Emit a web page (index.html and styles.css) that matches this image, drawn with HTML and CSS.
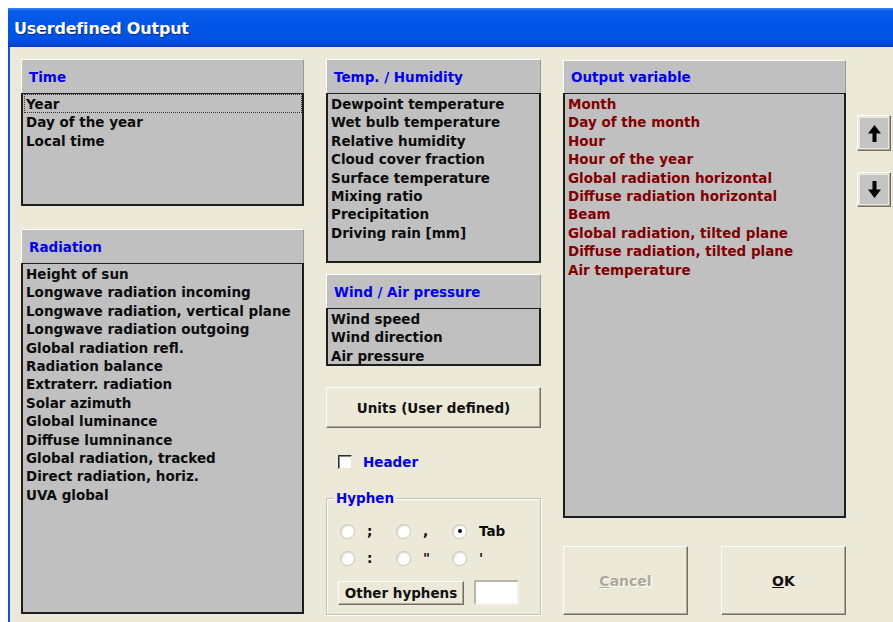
FILE: index.html
```html
<!DOCTYPE html>
<html lang="en">
<head>
<meta charset="utf-8">
<title>Userdefined Output</title>
<link rel="stylesheet" href="styles.css">
</head>
<body>
<div class="window">
  <div class="titlebar"><span class="title">Userdefined Output</span></div>
  <div class="client">

    <div class="col col-left">
      <div class="panel">
        <div class="panel-head">Time</div>
        <div class="list list-time">
          <div class="item focused">Year</div>
          <div class="item">Day of the year</div>
          <div class="item">Local time</div>
        </div>
      </div>
      <div class="panel panel-radiation">
        <div class="panel-head">Radiation</div>
        <div class="list list-radiation">
          <div class="item">Height of sun</div>
          <div class="item">Longwave radiation incoming</div>
          <div class="item">Longwave radiation, vertical plane</div>
          <div class="item">Longwave radiation outgoing</div>
          <div class="item">Global radiation refl.</div>
          <div class="item">Radiation balance</div>
          <div class="item">Extraterr. radiation</div>
          <div class="item">Solar azimuth</div>
          <div class="item">Global luminance</div>
          <div class="item">Diffuse lumninance</div>
          <div class="item">Global radiation, tracked</div>
          <div class="item">Direct radiation, horiz.</div>
          <div class="item">UVA global</div>
        </div>
      </div>
    </div>

    <div class="col col-mid">
      <div class="panel">
        <div class="panel-head">Temp. / Humidity</div>
        <div class="list list-temp">
          <div class="item">Dewpoint temperature</div>
          <div class="item">Wet bulb temperature</div>
          <div class="item">Relative humidity</div>
          <div class="item">Cloud cover fraction</div>
          <div class="item">Surface temperature</div>
          <div class="item">Mixing ratio</div>
          <div class="item">Precipitation</div>
          <div class="item">Driving rain [mm]</div>
        </div>
      </div>
      <div class="panel panel-wind">
        <div class="panel-head">Wind / Air pressure</div>
        <div class="list list-wind">
          <div class="item">Wind speed</div>
          <div class="item">Wind direction</div>
          <div class="item">Air pressure</div>
        </div>
      </div>
      <button class="btn btn-units" type="button">Units (User defined)</button>
      <label class="check-row">
        <span class="checkbox"></span>
        <span class="check-label">Header</span>
      </label>
      <fieldset class="group">
        <legend class="group-title">Hyphen</legend>
        <div class="radio-grid">
          <span class="radio-opt"><span class="radio"></span><span class="radio-label">;</span></span>
          <span class="radio-opt"><span class="radio"></span><span class="radio-label">,</span></span>
          <span class="radio-opt"><span class="radio checked"></span><span class="radio-label">Tab</span></span>
          <span class="radio-opt"><span class="radio"></span><span class="radio-label">:</span></span>
          <span class="radio-opt"><span class="radio"></span><span class="radio-label">"</span></span>
          <span class="radio-opt"><span class="radio"></span><span class="radio-label">'</span></span>
        </div>
        <div class="other-row">
          <button class="btn btn-other" type="button">Other hyphens</button>
          <span class="textbox"></span>
        </div>
      </fieldset>
    </div>

    <div class="col col-right">
      <div class="panel">
        <div class="panel-head">Output variable</div>
        <div class="list list-output">
          <div class="item">Month</div>
          <div class="item">Day of the month</div>
          <div class="item">Hour</div>
          <div class="item">Hour of the year</div>
          <div class="item">Global radiation horizontal</div>
          <div class="item">Diffuse radiation horizontal</div>
          <div class="item">Beam</div>
          <div class="item">Global radiation, tilted plane</div>
          <div class="item">Diffuse radiation, tilted plane</div>
          <div class="item">Air temperature</div>
        </div>
      </div>
      <div class="action-row">
        <button class="btn btn-big btn-disabled" type="button"><u>C</u>ancel</button>
        <button class="btn btn-big" type="button"><u>O</u>K</button>
      </div>
    </div>

    <div class="col col-arrows">
      <button class="btn btn-arrow" type="button">
        <span class="arrow-face">
          <svg width="13" height="17" viewBox="0 0 13 17"><path d="M6.5 0 L13 8.5 L8.5 8.5 L8.5 17 L4.5 17 L4.5 8.5 L0 8.5 Z" fill="#000"/></svg>
        </span>
      </button>
      <button class="btn btn-arrow btn-down" type="button">
        <span class="arrow-face">
          <svg width="13" height="17" viewBox="0 0 13 17"><path d="M4.5 0 L8.5 0 L8.5 8.5 L13 8.5 L6.5 17 L0 8.5 L4.5 8.5 Z" fill="#000"/></svg>
        </span>
      </button>
    </div>

  </div>
</div>
</body>
</html>
```

FILE: styles.css
```css
html, body {
  margin: 0;
  padding: 0;
  background: #ffffff;
  overflow: hidden;
}

body {
  padding: 8px 0 0 8px;
  font-family: "DejaVu Sans", Verdana, sans-serif;
  font-weight: bold;
  font-size: 13.5px;
  color: #0c0c0c;
}

.window {
  width: 885px;
  height: 614px;
  border-left: 2px solid #0a50e4;
  box-sizing: border-box;
  display: flex;
  flex-direction: column;
}

.titlebar {
  height: 39px;
  flex: none;
  margin-left: -2px;
  padding: 11px 0 0 6px;
  box-sizing: border-box;
  background: linear-gradient(#3f86f6 0, #0b5ce9 3px, #0056e8 40%, #0052e2 80%, #0047d4 95%, #003cbf 100%);
}

.title {
  color: #fff;
  font-size: 16px;
  line-height: 20px;
  font-weight: bold;
  letter-spacing: -0.2px;
  text-shadow: 1px 1px 0 #0a2c8c;
}

.client {
  flex: 1;
  background: #ece9d8;
  display: flex;
  padding: 12px 0 0 11px;
}

.col {
  display: flex;
  flex-direction: column;
}

.col-left { width: 283px; margin-right: 22px; }
.col-mid { width: 215px; margin-right: 22px; }
.col-right { width: 283px; margin-right: 11px; padding-top: 1px; }
.col-arrows { width: 34px; padding-top: 56px; }

/* list panels: raised caption strip over a bordered list */
.panel { display: flex; flex-direction: column; }

.panel-head {
  height: 34px;
  box-sizing: border-box;
  background: #c0c0c0;
  border-top: 1px solid #fff;
  border-left: 1px solid #fff;
  border-right: 1px solid #9a9a9a;
  color: #0000f0;
  padding: 8px 0 0 7px;
  line-height: 18px;
}

.col-right .panel-head { height: 33px; padding-top: 7px; }

.list {
  background: #c0c0c0;
  border: 2px solid #1e1e1e;
  border-top-width: 1px;
  padding: 1px 0 0 3px;
  box-sizing: border-box;
  overflow: hidden;
}

.item {
  height: 18.4px;
  line-height: 18.4px;
  white-space: nowrap;
}

.item.focused {
  outline: 1px dotted #333;
  outline-offset: -1px;
  margin-left: -2px;
  padding-left: 2px;
  margin-top: -1px;
  padding-top: 1px;
}

.list-time { height: 113px; }
.panel-radiation { margin-top: 23px; }
.list-radiation { height: 351px; }
.list-temp { height: 170px; }
.panel-wind { margin-top: 11px; }
.list-wind { height: 58px; }
.list-output { height: 425px; color: #820000; }

/* push buttons */
.btn {
  font-family: inherit;
  font-weight: bold;
  font-size: 13.5px;
  color: #111;
  background: #ece9d8;
  border: 1px solid;
  border-color: #fff #716f64 #716f64 #fff;
  box-shadow: inset -1px -1px 0 #aca899;
  padding: 0;
  margin: 0;
  cursor: default;
}

.btn-units {
  margin-top: 21px;
  height: 41px;
  width: 215px;
}

.check-row {
  display: flex;
  align-items: center;
  margin-top: 26px;
  padding-left: 12px;
  height: 16px;
}

.checkbox {
  width: 14px;
  height: 14px;
  box-sizing: border-box;
  background: #fff;
  border: 1px solid;
  border-color: #303030 #e8e6dc #e8e6dc #303030;
  box-shadow: inset 1px 1px 0 #8a887e;
}

.check-label {
  color: #0000f0;
  margin-left: 11px;
}

/* hyphen group box */
.group {
  margin: 20px 0 0;
  padding: 0 0 9px 13px;
  border: 1px solid #c5c2b2;
  box-shadow: inset 1px 1px 0 #fff, 1px 1px 0 #fff;
  min-width: 0;
}

.group-title {
  color: #0000f0;
  padding: 0 2px;
  margin-left: -6px;
  line-height: 16px;
}

.radio-grid {
  display: grid;
  grid-template-columns: 56px 56px 60px;
  row-gap: 9px;
  padding-top: 16px;
}

.radio-opt {
  display: flex;
  align-items: center;
  height: 18px;
}

.radio {
  position: relative;
  width: 15px;
  height: 15px;
  box-sizing: border-box;
  border-radius: 50%;
  background: #fff;
  border: 1px solid #c6c3b8;
  box-shadow: inset 1px 1px 0 #dcdad0;
}

.radio.checked::after {
  content: "";
  position: absolute;
  left: 4.5px;
  top: 4.5px;
  width: 4px;
  height: 4px;
  border-radius: 50%;
  background: #111;
}

.radio-label {
  margin-left: 12px;
}

.other-row {
  display: flex;
  align-items: center;
  margin-top: 13px;
  margin-left: -2px;
}

.btn-other {
  width: 126px;
  height: 24px;
}

.textbox {
  width: 45px;
  height: 25px;
  box-sizing: border-box;
  margin-left: 10px;
  background: #fff;
  border: 2px solid;
  border-color: #b8b5a8 #f4f3ee #f4f3ee #b8b5a8;
}

.action-row {
  display: flex;
  justify-content: space-between;
  margin-top: 28px;
}

.btn-big {
  width: 125px;
  height: 69px;
  font-size: 14px;
}

.btn-disabled {
  color: #aca899;
  text-shadow: 1px 1px 0 #fff;
}

.btn-arrow {
  width: 34px;
  height: 36px;
  padding: 2px;
  display: flex;
  align-items: stretch;
  justify-content: stretch;
}

.btn-down {
  margin-top: 21px;
  height: 35px;
}

.arrow-face {
  flex: 1;
  background: #c4c4c4;
  display: flex;
  align-items: center;
  justify-content: center;
}
```
